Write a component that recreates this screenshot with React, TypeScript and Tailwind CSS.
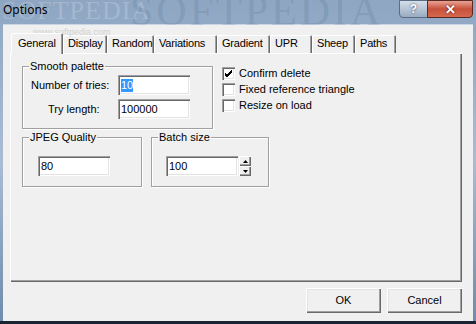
import React from "react"

const font = { fontFamily: '"Liberation Sans", Arial, sans-serif' }

const tabs = [
  { label: "Display", w: 44 },
  { label: "Random", w: 47 },
  { label: "Variations", w: 63 },
  { label: "Gradient", w: 53 },
  { label: "UPR", w: 42 },
  { label: "Sheep", w: 43 },
  { label: "Paths", w: 41 },
]

function Sunken({ className = "", children }: { className?: string; children: React.ReactNode }) {
  return (
    <div
      className={
        "flex items-center bg-white pl-[3px] text-[11px] text-black shadow-[inset_1px_1px_0_#a0a0a0,inset_2px_2px_0_#696969,inset_-1px_-1px_0_#ffffff,inset_-2px_-2px_0_#e3e3e3] " +
        className
      }
    >
      {children}
    </div>
  )
}

function Check({ checked, label }: { checked?: boolean; label: string }) {
  return (
    <div className="flex h-[16px] items-start gap-[4px]">
      <div className="flex h-[13px] w-[13px] items-center justify-center bg-white shadow-[inset_1px_1px_0_#a0a0a0,inset_2px_2px_0_#696969,inset_-1px_-1px_0_#ffffff,inset_-2px_-2px_0_#e3e3e3]">
        {checked && (
          <svg width="9" height="9" viewBox="0 0 9 9">
            <path d="M1 4 L3 6 L8 1 M1 5 L3 7 L8 2 M1 6 L3 8 L8 3" stroke="#000" strokeWidth="1" fill="none" />
          </svg>
        )}
      </div>
      <span className="-mt-[1px] text-[11px] leading-[14px] text-black">{label}</span>
    </div>
  )
}

function Group({ title, className = "", children }: { title: string; className?: string; children: React.ReactNode }) {
  return (
    <div className={"relative border border-[#a0a0a0] shadow-[inset_1px_1px_0_#ffffff,1px_1px_0_#ffffff] " + className}>
      <span className="absolute -top-[8px] left-[6px] bg-[#f0f0f0] px-px text-[11px] leading-[14px] text-black">{title}</span>
      {children}
    </div>
  )
}

function Btn({ label }: { label: string }) {
  return (
    <div className="flex h-[25px] w-[75px] items-center justify-center bg-[#f0f0f0] text-[11px] text-black shadow-[inset_1px_1px_0_#ffffff,inset_-1px_-1px_0_#696969,inset_-2px_-2px_0_#a0a0a0,inset_2px_2px_0_#e3e3e3]">
      {label}
    </div>
  )
}

export default function App() {
  return (
    <div className="relative flex h-[324px] w-[476px] flex-col overflow-hidden bg-gradient-to-b from-[#8ea6c2] via-[#a8bcd4] to-[#6f8aab]" style={font}>
      {/* title bar */}
      <div className="relative flex h-[25px] items-start overflow-hidden">
        {/* watermark */}
        <span className="pointer-events-none absolute left-[2px] top-[-1px] text-[26px] leading-[24px] tracking-[1px] text-white/20" style={{ fontFamily: '"Liberation Serif", serif' }}>
          SOFTPEDIA
        </span>
        <span className="pointer-events-none absolute left-[130px] top-[-2px] text-[42px] leading-[27px] tracking-[3px] text-[#2e4a70]/15" style={{ fontFamily: '"Liberation Serif", serif' }}>
          SOFTPEDIA
        </span>
        <span className="relative ml-[3px] mt-[3px] text-[12px] leading-[14px] text-black" style={{ fontFamily: '"Noto Sans", sans-serif' }}>
          Options
        </span>
        <div className="relative ml-auto mr-[3px] flex">
          <div className="flex h-[18px] w-[29px] items-center justify-center rounded-bl-[4px] border border-[#5a6d87] bg-gradient-to-b from-[#d5dfea] to-[#9aabc0] text-[12px] font-bold leading-none text-white [text-shadow:0_0_2px_#334]">
            ?
          </div>
          <div className="-ml-px flex h-[18px] w-[46px] items-center justify-center rounded-br-[4px] border border-[#5a2a22] bg-gradient-to-b from-[#e8a293] via-[#c7503c] to-[#d46a4d] text-[13px] font-bold leading-none text-white [text-shadow:0_0_2px_#400]">
            ✕
          </div>
        </div>
      </div>

      {/* client */}
      <div className="mx-[3px] flex h-[296px] flex-col bg-[#f0f0f0] shadow-[0_-1px_0_#c9d6e5]">
        <span className="pointer-events-none absolute left-[33px] top-[28px] text-[9px] leading-[9px] text-[#d0d0d0]">www.softpedia.com</span>

        {/* tabs */}
        <div className="ml-[8px] mt-[8px] flex h-[20px] items-end tracking-[-0.2px]">
          <div className="relative z-10 -mb-px flex h-[21px] w-[52px] items-start rounded-t-[2px] bg-[#f0f0f0] pl-[7px] pt-[4px] text-[11px] leading-[13px] text-black shadow-[inset_1px_1px_0_#ffffff,inset_-1px_0_0_#696969,inset_-2px_0_0_#a0a0a0]">
            General
          </div>
          {tabs.map((t) => (
            <div
              key={t.label}
              className="flex h-[18px] items-start rounded-t-[2px] pl-[5px] pt-[2px] text-[11px] leading-[13px] text-black shadow-[inset_1px_1px_0_#ffffff,inset_-1px_0_0_#696969,inset_-2px_0_0_#a0a0a0]"
              style={{ width: t.w }}
            >
              {t.label}
            </div>
          ))}
        </div>

        {/* panel */}
        <div className="ml-[7px] h-[229px] w-[452px] pl-[12px] pt-[13px] shadow-[inset_1px_1px_0_#ffffff,inset_-1px_-1px_0_#696969,inset_-2px_-2px_0_#a0a0a0]">
          <div className="flex items-start">
            <Group title="Smooth palette" className="h-[63px] w-[191px] pt-[8px]">
              <div className="flex flex-col gap-[4px]">
                <div className="flex items-center">
                  <span className="ml-[8px] w-[87px] text-[11px] text-black">Number of tries:</span>
                  <Sunken className="h-[20px] w-[72px]">
                    <span className="bg-[#3399ff] leading-[13px] text-white">10</span>
                  </Sunken>
                </div>
                <div className="flex items-center">
                  <span className="ml-[25px] w-[70px] text-[11px] text-black">Try length:</span>
                  <Sunken className="h-[20px] w-[72px]">100000</Sunken>
                </div>
              </div>
            </Group>
            <div className="ml-[9px] mt-[1px] flex flex-col">
              <Check checked label="Confirm delete" />
              <Check label="Fixed reference triangle" />
              <Check label="Resize on load" />
            </div>
          </div>

          <div className="mt-[8px] flex items-start gap-[9px]">
            <Group title="JPEG Quality" className="h-[50px] w-[120px] pl-[15px] pt-[18px]">
              <Sunken className="h-[20px] w-[72px]">80</Sunken>
            </Group>
            <Group title="Batch size" className="h-[50px] w-[118px] pl-[14px] pt-[18px]">
              <div className="flex items-start gap-px">
                <Sunken className="h-[20px] w-[72px]">100</Sunken>
                <div className="flex flex-col">
                  {["up", "down"].map((d) => (
                    <div
                      key={d}
                      className="flex h-[10px] w-[12px] items-center justify-center bg-[#f0f0f0] shadow-[inset_1px_1px_0_#ffffff,inset_-1px_-1px_0_#696969,inset_-2px_-2px_0_#a0a0a0]"
                    >
                      <svg width="5" height="3" viewBox="0 0 5 3">
                        <path d={d === "up" ? "M2.5 0 L5 3 L0 3 Z" : "M0 0 L5 0 L2.5 3 Z"} fill="#000" />
                      </svg>
                    </div>
                  ))}
                </div>
              </div>
            </Group>
          </div>
        </div>

        {/* buttons */}
        <div className="mr-[11px] mt-[6px] flex justify-end gap-[6px]">
          <Btn label="OK" />
          <Btn label="Cancel" />
        </div>
      </div>
      <div className="mt-auto h-[3px] bg-[#1a2433]" />
    </div>
  )
}
